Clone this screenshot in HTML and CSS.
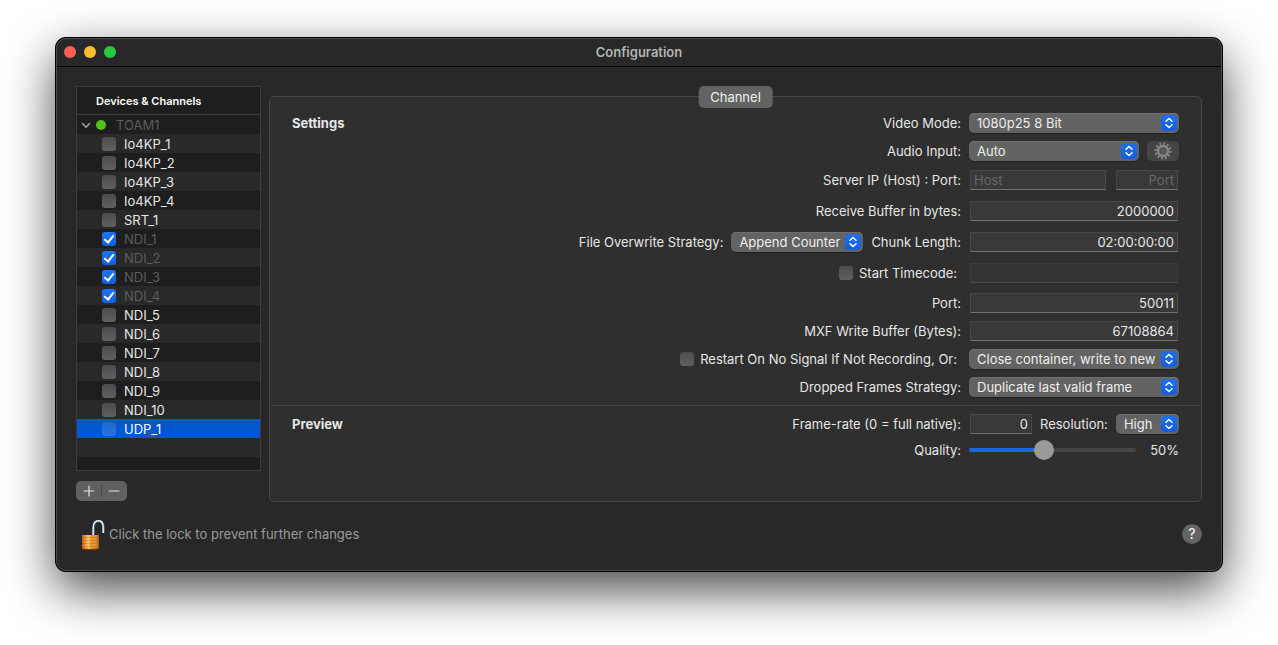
FILE: index.html
```html
<!DOCTYPE html>
<html lang="en">
<head>
    <meta charset="UTF-8">
    <meta name="viewport" content="width=device-width, initial-scale=1.0">
    <title>Configuration</title>
    <link rel="stylesheet" href="styles.css">
</head>
<body>
    <!-- shared icons -->
    <svg class="icon-defs" aria-hidden="true">
        <symbol id="icon-updown" viewBox="0 0 16 16">
            <path d="M5 6.3 8 3.5l3 2.8M5 9.7l3 2.8 3-2.8" fill="none" stroke="#fff" stroke-width="1.5" stroke-linecap="round" stroke-linejoin="round"/>
        </symbol>
    </svg>

    <div class="window">
        <header class="titlebar">
            <div class="lights">
                <button class="light close" aria-label="Close"></button>
                <button class="light minimize" aria-label="Minimize"></button>
                <button class="light zoom" aria-label="Zoom"></button>
            </div>
            <h1>Configuration</h1>
        </header>

        <div class="content">
            <!-- device list -->
            <aside class="sidebar">
                <div class="device-list">
                    <h2>Devices &amp; Channels</h2>
                    <ul>
                        <li class="device">
                            <svg class="chevron" viewBox="0 0 10 10"><path d="M1.5 3.5 5 7.3l3.5-3.8" fill="none" stroke="#a0a0a0" stroke-width="1.5" stroke-linecap="round" stroke-linejoin="round"/></svg>
                            <span class="status"></span>
                            <span>TOAM1</span>
                        </li>
                        <li><label><input type="checkbox">Io4KP_1</label></li>
                        <li><label><input type="checkbox">Io4KP_2</label></li>
                        <li><label><input type="checkbox">Io4KP_3</label></li>
                        <li><label><input type="checkbox">Io4KP_4</label></li>
                        <li><label><input type="checkbox">SRT_1</label></li>
                        <li class="active"><label><input type="checkbox" checked>NDI_1</label></li>
                        <li class="active"><label><input type="checkbox" checked>NDI_2</label></li>
                        <li class="active"><label><input type="checkbox" checked>NDI_3</label></li>
                        <li class="active"><label><input type="checkbox" checked>NDI_4</label></li>
                        <li><label><input type="checkbox">NDI_5</label></li>
                        <li><label><input type="checkbox">NDI_6</label></li>
                        <li><label><input type="checkbox">NDI_7</label></li>
                        <li><label><input type="checkbox">NDI_8</label></li>
                        <li><label><input type="checkbox">NDI_9</label></li>
                        <li><label><input type="checkbox">NDI_10</label></li>
                        <li class="selected"><label><input type="checkbox">UDP_1</label></li>
                        <li></li>
                        <li class="last"></li>
                    </ul>
                </div>
                <div class="add-remove">
                    <button aria-label="Add">
                        <svg viewBox="0 0 12 12"><path d="M6 1v10M1 6h10" stroke="#e4e4e4" stroke-width="1.2" stroke-linecap="round"/></svg>
                    </button>
                    <button aria-label="Remove">
                        <svg viewBox="0 0 12 12"><path d="M1 6h10" stroke="#e4e4e4" stroke-width="1.2" stroke-linecap="round"/></svg>
                    </button>
                </div>
            </aside>

            <!-- channel settings -->
            <main class="panel">
                <button class="tab">Channel</button>

                <section class="group">
                    <h3>Settings</h3>
                    <div class="rows">
                        <div class="row">
                            <label for="videoMode">Video Mode:</label>
                            <span class="select wide">
                                <select id="videoMode"><option>1080p25 8 Bit</option></select>
                                <svg><use href="#icon-updown"/></svg>
                            </span>
                        </div>
                        <div class="row">
                            <label for="audioInput">Audio Input:</label>
                            <span class="fields">
                                <span class="select">
                                    <select id="audioInput"><option>Auto</option></select>
                                    <svg><use href="#icon-updown"/></svg>
                                </span>
                                <button class="gear" aria-label="Audio settings" disabled>
                                    <svg viewBox="0 0 20 20">
                                        <circle cx="10" cy="10" r="5.5" fill="none" stroke="#858585" stroke-width="3"/>
                                        <circle cx="10" cy="10" r="8" fill="none" stroke="#858585" stroke-width="3" stroke-dasharray="2 2.189"/>
                                        <circle cx="10" cy="10" r="3" fill="#5c5c5c"/>
                                    </svg>
                                </button>
                            </span>
                        </div>
                        <div class="row medium">
                            <label for="host">Server IP (Host) : Port:</label>
                            <span class="fields boxed">
                                <input type="text" class="host" id="host" placeholder="Host">
                                <input type="text" class="short" aria-label="Port" placeholder="Port">
                            </span>
                        </div>
                        <div class="row tall">
                            <label for="buffer">Receive Buffer in bytes:</label>
                            <span class="fields boxed"><input type="text" id="buffer" value="2000000"></span>
                        </div>
                        <div class="row medium">
                            <label for="overwrite">File Overwrite Strategy:</label>
                            <span class="select">
                                <select id="overwrite"><option>Append Counter</option></select>
                                <svg><use href="#icon-updown"/></svg>
                            </span>
                            <label for="chunk">Chunk Length:</label>
                            <span class="fields boxed"><input type="text" id="chunk" value="02:00:00:00"></span>
                        </div>
                        <div class="row tall">
                            <label class="check"><input type="checkbox">Start Timecode:</label>
                            <span class="fields boxed"><input type="text" aria-label="Start Timecode" disabled></span>
                        </div>
                        <div class="row">
                            <label for="port">Port:</label>
                            <span class="fields boxed"><input type="text" id="port" value="50011"></span>
                        </div>
                        <div class="row">
                            <label for="mxf">MXF Write Buffer (Bytes):</label>
                            <span class="fields boxed"><input type="text" id="mxf" value="67108864"></span>
                        </div>
                        <div class="row">
                            <label class="check"><input type="checkbox">Restart On No Signal If Not Recording, Or:</label>
                            <span class="select wide">
                                <select aria-label="No signal action"><option>Close container, write to new</option></select>
                                <svg><use href="#icon-updown"/></svg>
                            </span>
                        </div>
                        <div class="row">
                            <label for="dropped">Dropped Frames Strategy:</label>
                            <span class="select wide">
                                <select id="dropped"><option>Duplicate last valid frame</option></select>
                                <svg><use href="#icon-updown"/></svg>
                            </span>
                        </div>
                    </div>
                </section>

                <hr>

                <section class="group">
                    <h3>Preview</h3>
                    <div class="rows">
                        <div class="row">
                            <label for="rate">Frame-rate (0 = full native):</label>
                            <span class="fields">
                                <input type="text" class="short" id="rate" value="0">
                                <label for="resolution">Resolution:</label>
                                <span class="select">
                                    <select id="resolution"><option>High</option></select>
                                    <svg><use href="#icon-updown"/></svg>
                                </span>
                            </span>
                        </div>
                        <div class="row short-row">
                            <label for="quality">Quality:</label>
                            <span class="fields">
                                <input type="range" id="quality" min="0" max="100" value="44">
                                <output for="quality">50%</output>
                            </span>
                        </div>
                    </div>
                </section>
            </main>
        </div>

        <footer class="footer">
            <button class="lock">
                <svg viewBox="0 0 26 32">
                    <defs>
                        <linearGradient id="brass">
                            <stop offset="0" stop-color="#b4610f"/>
                            <stop offset=".15" stop-color="#e08f2a"/>
                            <stop offset=".38" stop-color="#ffc668"/>
                            <stop offset=".55" stop-color="#e8982f"/>
                            <stop offset=".8" stop-color="#e09434"/>
                            <stop offset="1" stop-color="#a95c12"/>
                        </linearGradient>
                    </defs>
                    <path d="M13.5 17V9.5C13.5 5 15.500 3 18.500 3s5 2.500 5 6.500V15" fill="none" stroke="#50697a" stroke-width="2.6"/>
                    <path d="M13.2 17V9.5C13.2 5 15.500 2.800 18.500 2.800s4.700 2.500 4.700 6.700V15" fill="none" stroke="#eef7fb" stroke-width="1.4"/>
                    <path d="M2 17h17v14q-8 1.500-17 0z" fill="url(#brass)"/>
                    <path d="M2 19.500h17M2 22.500h17M2 25.500h17M2 28.500h17" stroke="#9c5510" stroke-width=".7" opacity=".4"/>
                    <path d="M2 31q8 1.300 17-.3" fill="none" stroke="#7c2b08" stroke-width="1"/>
                </svg>
                <span>Click the lock to prevent further changes</span>
            </button>
            <button class="help" aria-label="Help">?</button>
        </footer>
    </div>
</body>
</html>
```
FILE: styles.css
```css
* {
    box-sizing: border-box;
}
body {
    min-height: 100vh;
    margin: 0;
    padding: 38px 56px;
    background: #fff;
    color: #e6e6e6;
    font-family: Inter, "Liberation Sans", sans-serif;
    font-size: 13px;
    line-height: 16px;
}
h1, h2, h3, ul {
    margin: 0;
    padding: 0;
}
button, input, select {
    margin: 0;
    padding: 0;
    border: none;
    color: inherit;
    font: inherit;
}
.icon-defs {
    position: absolute;
    width: 0;
    height: 0;
}

/* window */
.window {
    background: #282828;
    border: 1px solid #4c4c4c;
    border-radius: 10px;
    box-shadow: 0 0 0 1px #000, 0 18px 50px rgba(0, 0, 0, 0.74);
}
.titlebar {
    display: grid;
    grid-template-columns: 1fr auto 1fr;
    align-items: center;
    height: 28px;
    padding: 0 7px 2px;
    border-bottom: 1px solid #000;
}
.titlebar h1 {
    color: #b4b4b4;
    font-size: 13px;
    font-weight: 600;
}
.lights {
    display: flex;
    gap: 8px;
}
.light {
    width: 12px;
    height: 12px;
    border-radius: 50%;
}
.close {
    background: #ff5f57;
}
.minimize {
    background: #febc2e;
}
.zoom {
    background: #28c840;
}
.content {
    display: flex;
    gap: 8px;
    padding: 19px 19px 0;
}

/* sidebar */
.sidebar {
    flex: 0 0 185px;
}
.device-list {
    border: 1px solid #3c3c3c;
    background: #1e1e1e;
}
.device-list h2 {
    height: 28px;
    padding-left: 19px;
    border-bottom: 1px solid #3a3a3a;
    color: #fff;
    font-size: 11px;
    font-weight: 600;
    line-height: 28px;
}
.device-list ul {
    list-style: none;
}
.device-list li {
    height: 19px;
    padding-left: 25px;
}
.device-list li:nth-child(even) {
    background: #292929;
}
.device-list li.last {
    height: 13px;
}
.device-list label {
    display: flex;
    align-items: center;
    gap: 8px;
    height: 19px;
}
.device-list .device {
    display: flex;
    align-items: center;
    padding-left: 4px;
    color: #5c5c5c;
}
.chevron {
    width: 10px;
    height: 10px;
    margin-right: 5px;
}
.status {
    width: 10px;
    height: 10px;
    margin-right: 10px;
    border-radius: 50%;
    background: #53c21d;
}
.device-list .active {
    color: #5c5c5c;
}
.device-list .selected {
    background: #0058d0;
    color: #fff;
}
.add-remove {
    display: inline-flex;
    height: 20px;
    margin-top: 10px;
    border-radius: 5px;
    background: #606060;
}
.add-remove button {
    display: flex;
    align-items: center;
    justify-content: center;
    width: 25px;
    background: none;
}
.add-remove button + button {
    width: 26px;
    background: linear-gradient(#4a4a4a, #4a4a4a) 0 50% / 1px 12px no-repeat;
}
.add-remove svg {
    width: 12px;
    height: 12px;
}

/* checkboxes */
input[type="checkbox"] {
    appearance: none;
    display: flex;
    justify-content: center;
    flex: none;
    width: 14px;
    height: 14px;
    border-radius: 3px;
    background: linear-gradient(#4c4c4c, #606060);
}
input[type="checkbox"]:checked {
    background: linear-gradient(#1f74f0, #1260dd);
}
input[type="checkbox"]:checked::after {
    content: "";
    box-sizing: border-box;
    width: 6px;
    height: 10px;
    margin-top: 1px;
    border: solid #fff;
    border-width: 0 2px 2px 0;
    transform: rotate(38deg);
}
.selected input[type="checkbox"] {
    background: linear-gradient(#1c66d3, #2b74d8);
}

/* panel */
.panel {
    position: relative;
    flex: 1;
    min-height: 406px;
    margin-top: 10px;
    padding: 12px 2px 0;
    border: 1px solid #474747;
    border-radius: 5px;
    background: #2f2f2f;
}
.tab {
    position: absolute;
    top: -11px;
    left: 50%;
    height: 22px;
    padding: 0 12px;
    transform: translateX(-50%);
    border-radius: 5px;
    background: #636363;
    color: #eee;
}
.group {
    display: flex;
    padding: 0 20px;
}
.group h3 {
    width: 80px;
    font-size: 13px;
    font-weight: 700;
    line-height: 28px;
}
.rows {
    flex: 1;
}
.row {
    display: flex;
    align-items: center;
    justify-content: flex-end;
    gap: 8px;
    height: 28px;
}
.row.medium {
    height: 30px;
}
.row.tall {
    height: 32px;
}
.row.short-row {
    height: 24px;
}
.fields {
    display: flex;
    align-items: center;
    gap: 8px;
    width: 210px;
}
.boxed {
    gap: 10px;
    padding: 0 1px;
}
.check {
    display: flex;
    align-items: center;
    gap: 6px;
    padding-right: 4px;
}
hr {
    margin: 4px 0;
    border: none;
    border-top: 1px solid #454545;
}

/* text fields */
input[type="text"] {
    flex: 1;
    min-width: 0;
    height: 20px;
    padding: 0 3px;
    border: 1px solid #474747;
    border-bottom-color: #727272;
    background: #393939;
    text-align: right;
}
input[type="text"].host {
    text-align: left;
}
input[type="text"].short {
    flex: 0 0 62px;
}
.row > .fields > .short:first-child {
    margin-left: 1px;
}
input[type="text"]:disabled {
    border-color: #3d3d3d;
    border-bottom-color: #4a4a4a;
    background: #333;
}
::placeholder {
    color: #686868;
}

/* pop-up buttons */
.select {
    position: relative;
    display: flex;
}
.select.wide {
    width: 210px;
}
.fields .select {
    flex: 1;
}
.select select {
    appearance: none;
    width: 100%;
    height: 20px;
    padding: 0 22px 0 8px;
    border-radius: 5px;
    background: #636363;
    box-shadow: inset 0 1px 0 #707070, 0 1px 1px rgba(0, 0, 0, 0.3);
    color: #eee;
}
.select svg {
    position: absolute;
    top: 2px;
    right: 2px;
    width: 16px;
    height: 16px;
    border-radius: 4px;
    background: linear-gradient(#1f70ec, #125edb);
    pointer-events: none;
}
.gear {
    display: flex;
    align-items: center;
    justify-content: center;
    width: 32px;
    height: 20px;
    border-radius: 5px;
    background: #454545;
}
.gear svg {
    width: 18px;
    height: 18px;
}

/* slider */
input[type="range"] {
    appearance: none;
    flex: 1;
    min-width: 0;
    height: 20px;
    background: none;
}
input[type="range"]::-webkit-slider-runnable-track {
    height: 4px;
    border-radius: 2px;
    background: linear-gradient(to right, #1868e6 45%, #454545 45%);
}
input[type="range"]::-webkit-slider-thumb {
    appearance: none;
    width: 20px;
    height: 20px;
    margin-top: -8px;
    border-radius: 50%;
    background: #9a9a9a;
}
output {
    width: 35px;
    text-align: right;
}

/* footer */
.footer {
    display: flex;
    align-items: center;
    justify-content: space-between;
    height: 68px;
    padding: 0 19px 4px 23px;
}
.lock {
    display: flex;
    align-items: center;
    gap: 3px;
    background: none;
    color: #9a9a9a;
}
.lock svg {
    width: 26px;
    height: 32px;
}
.help {
    width: 20px;
    height: 20px;
    border-radius: 50%;
    background: #636363;
    color: #eee;
    font-size: 14px;
    font-weight: 500;
    line-height: 20px;
}
```
